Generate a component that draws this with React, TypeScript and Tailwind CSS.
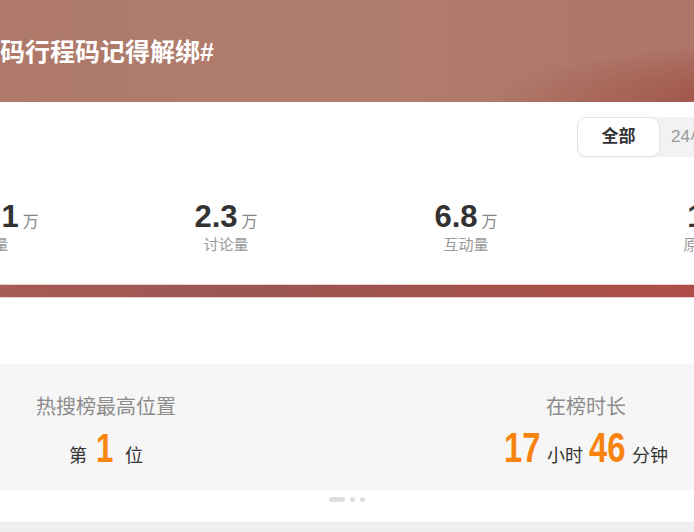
import React from "react";

const stats = [
  { n: "124.1", l: "阅读量" },
  { n: "2.3", l: "讨论量" },
  { n: "6.8", l: "互动量" },
  { n: "1", l: "原创量" },
];

function Narrow({ text, w, size }: { text: string; w: string; size: string }) {
  return (
    <span className={`inline-block ${w} whitespace-nowrap`}>
      <span
        className={`inline-block origin-left scale-x-[0.78] ${size} font-bold text-[#f8830f] leading-[36px]`}
      >
        {text}
      </span>
    </span>
  );
}

export default function App() {
  return (
    <div
      className="w-[694px] h-[532px] overflow-hidden bg-white"
      style={{ fontFamily: '"Liberation Sans", "Noto Sans CJK SC", sans-serif' }}
    >
      <div className="w-[960px] ml-[-134px] flex flex-col">
        {/* header */}
        <div className="h-[102px] pl-[134px] flex items-center pt-[3px] bg-[radial-gradient(ellipse_35%_60%_at_100%_100%,#9b463c_0%,rgba(165,90,78,0)_100%),linear-gradient(90deg,#ad7868_0%,#b17d6d_50%,#ab7264_100%)]">
          <span className="text-[25px] font-bold text-white leading-none">
            码行程码记得解绑#
          </span>
        </div>

        {/* white card */}
        <div className="h-[182px] bg-white flex flex-col">
          <div className="ml-[711px] mt-[15px] flex h-[40px] bg-[#f2f2f2] rounded-l-[9px] w-[300px]">
            <div className="w-[83px] h-[40px] bg-white border border-[#e4e4e4] rounded-[9px] flex items-center justify-center shadow-[0_1px_2px_rgba(0,0,0,0.04)]">
              <span className="text-[17px] font-bold text-[#333]">全部</span>
            </div>
            <div className="flex items-center pl-[11px]">
              <span className="text-[17px] text-[#999]">24小时</span>
            </div>
          </div>
          <div className="flex mt-[44px]">
            {stats.map((s, i) => (
              <div key={s.l} className="w-[240px] flex flex-col items-center">
                <div className={`flex items-baseline ${i === 0 ? "ml-[8px]" : ""}`}>
                  <span className="text-[31px] font-bold text-[#333] leading-[32px]">{s.n}</span>
                  <span className="text-[16px] text-[#888] ml-[4px]">万</span>
                </div>
                <span className="text-[15px] text-[#999] leading-[20px] mt-[1px]">{s.l}</span>
              </div>
            ))}
          </div>
        </div>

        {/* strip */}
        <div className="h-[14px] bg-[linear-gradient(90deg,#ad5f56_0%,#9a5652_40%,#a6504a_70%,#b64b46_100%)] border-y border-[#ecd0d0]" />

        <div className="h-[66px] bg-white" />

        {/* gray box */}
        <div className="h-[126px] bg-[#f6f6f6] grid grid-cols-2">
          <div className="flex flex-col items-center pt-[29px]">
            <span className="text-[20px] text-[#8c8c8c] leading-[28px]">热搜榜最高位置</span>
            <div className="flex items-baseline gap-[9px] mt-[9px]">
              <span className="text-[18px] text-[#333]">第</span>
              <Narrow text="1" w="w-[18px]" size="text-[40px]" />
              <span className="text-[18px] text-[#333] ml-[2px]">位</span>
            </div>
          </div>
          <div className="flex flex-col items-center pt-[29px]">
            <span className="text-[20px] text-[#8c8c8c] leading-[28px]">在榜时长</span>
            <div className="flex items-baseline gap-[6px] mt-[9px]">
              <Narrow text="17" w="w-[37px]" size="text-[42px]" />
              <span className="text-[18px] text-[#333]">小时</span>
              <Narrow text="46" w="w-[37px]" size="text-[42px]" />
              <span className="text-[18px] text-[#333]">分钟</span>
            </div>
          </div>
        </div>

        {/* dots */}
        <div className="h-[32px] flex justify-center pt-[7px] pl-[1px]">
          <div className="flex items-start gap-[5px]">
            <div className="w-[16px] h-[5px] rounded-full bg-[#dedede]" />
            <div className="w-[5px] h-[5px] rounded-full bg-[#dedede]" />
            <div className="w-[5px] h-[5px] rounded-full bg-[#dedede]" />
          </div>
        </div>

        <div className="h-[12px] bg-[#efefef] border-t border-[#e6e6e6]" />
      </div>
    </div>
  );
}
